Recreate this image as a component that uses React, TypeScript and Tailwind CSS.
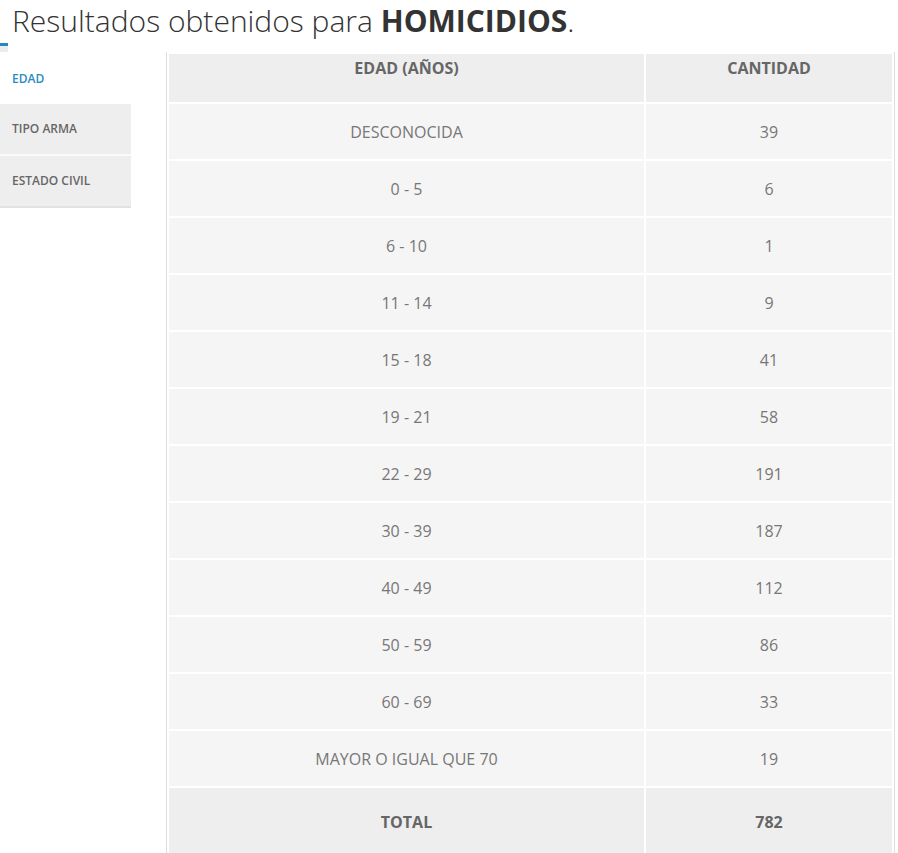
import React from "react";

const rows: [string, string][] = [
  ["DESCONOCIDA", "39"],
  ["0 - 5", "6"],
  ["6 - 10", "1"],
  ["11 - 14", "9"],
  ["15 - 18", "41"],
  ["19 - 21", "58"],
  ["22 - 29", "191"],
  ["30 - 39", "187"],
  ["40 - 49", "112"],
  ["50 - 59", "86"],
  ["60 - 69", "33"],
  ["MAYOR O IGUAL QUE 70", "19"],
];

const tabs = [
  { label: "EDAD", active: true },
  { label: "TIPO ARMA", active: false },
  { label: "ESTADO CIVIL", active: false },
];

export default function App() {
  return (
    <div
      className="min-h-[853px] bg-white"
      style={{ fontFamily: '"Open Sans", "Liberation Sans", sans-serif' }}
    >
      {/* Title */}
      <h1 className="h-[43px] pl-[12px] text-[30px] leading-[41px] font-light text-[#333]">
        Resultados obtenidos para <b className="font-bold">HOMICIDIOS</b>.
      </h1>

      <div className="flex">
        {/* Sidebar tabs */}
        <div className="w-[131px] shrink-0">
          <div className="h-[3px] w-[8px] bg-[#2389c0]" />
          <div className="h-[6px] w-[8px] bg-[#ececec]" />
          {tabs.map((t, i) => (
            <div
              key={t.label}
              className={
                "flex h-[52px] items-center border-b-2 pl-[12px] text-[12px] font-semibold " +
                (t.active
                  ? "bg-white pt-[3px] text-[#2a8cc0] border-white"
                  : "bg-[#eeeeee] text-[#666] " +
                    (i === tabs.length - 1 ? "border-[#e2e2e2]" : "border-[#fafafa]"))
              }
            >
              {t.label}
            </div>
          ))}
        </div>

        {/* Results table */}
        <div className="ml-[35px] mt-[9px] border-l border-r border-[#dddddd]">
          <table className="border-separate border-spacing-[2px] text-center">
            <thead>
              <tr>
                <th className="h-[48px] w-[475px] bg-[#eeeeee] pt-[3px] align-top text-[16px] leading-[22px] font-bold text-[#666]">
                  EDAD (AÑOS)
                </th>
                <th className="h-[48px] w-[246px] bg-[#eeeeee] pt-[3px] align-top text-[16px] leading-[22px] font-bold text-[#666]">
                  CANTIDAD
                </th>
              </tr>
            </thead>
            <tbody>
              {rows.map(([edad, cant]) => (
                <tr key={edad}>
                  <td className="h-[55px] bg-[#f5f5f5] text-[16px] text-[#777]">{edad}</td>
                  <td className="h-[55px] bg-[#f5f5f5] text-[16px] text-[#777]">{cant}</td>
                </tr>
              ))}
              <tr>
                <td className="h-[68px] bg-[#eeeeee] text-[16px] font-bold text-[#666]">TOTAL</td>
                <td className="h-[68px] bg-[#eeeeee] text-[16px] font-bold text-[#666]">782</td>
              </tr>
            </tbody>
          </table>
        </div>
      </div>
    </div>
  );
}
